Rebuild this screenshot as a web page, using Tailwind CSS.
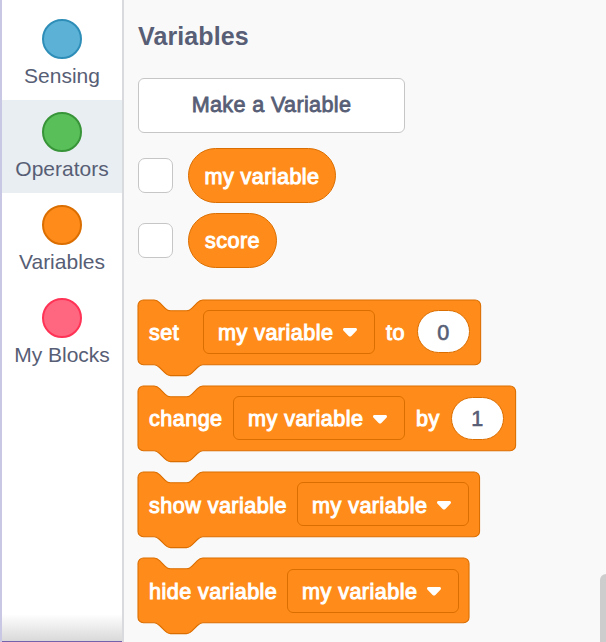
<!DOCTYPE html>
<html lang="en">
<head>
    <meta charset="UTF-8">
    <meta name="viewport" content="width=device-width, initial-scale=1.0">
    <title>Variables</title>
    <script src="https://cdn.jsdelivr.net/npm/@tailwindcss/browser@4"></script>
</head>
<body class="flex h-[642px] w-[606px] overflow-hidden bg-[#f9f9f9] font-['Liberation_Sans',Arial,sans-serif] text-[#575e75]">

    <!-- Category menu -->
    <nav class="relative flex w-[124px] shrink-0 flex-col border-r-2 border-l-2 border-r-[#d9dade] border-l-[#c8c8e4] bg-white pt-[7px] text-[21px] leading-6">
        <div class="flex h-[93px] flex-col items-center gap-[5px] pt-3">
            <span class="size-10 rounded-full border-2 border-[#2e8eb8] bg-[#5cb1d6]"></span>
            <span>Sensing</span>
        </div>
        <div class="flex h-[93px] flex-col items-center gap-[5px] bg-[#e9eef2] pt-3">
            <span class="size-10 rounded-full border-2 border-[#389438] bg-[#59c059]"></span>
            <span>Operators</span>
        </div>
        <div class="flex h-[93px] flex-col items-center gap-[5px] pt-3">
            <span class="size-10 rounded-full border-2 border-[#db6e00] bg-[#ff8c1a]"></span>
            <span>Variables</span>
        </div>
        <div class="flex h-[93px] flex-col items-center gap-[5px] pt-3">
            <span class="size-10 rounded-full border-2 border-[#ff3355] bg-[#ff6680]"></span>
            <span class="whitespace-nowrap">My Blocks</span>
        </div>
        <div class="mt-auto h-7 border-b border-[#7562ad] bg-linear-to-b from-white to-[#d9d9d9]"></div>
    </nav>

    <!-- Flyout -->
    <main class="relative grow pt-[21px] pl-[14px]">
        <h1 class="text-[25px] leading-[30px] font-bold tracking-[0.1px]">Variables</h1>

        <button class="mt-[27px] flex h-[55px] w-[267px] items-center justify-center rounded-[6px] border border-[#c6c6c6] bg-white text-[21.6px] tracking-[0.35px] [-webkit-text-stroke:0.8px_#575e75]">Make a Variable</button>

        <div class="mt-[15px] flex items-center gap-[15px]">
            <span class="size-[35px] rounded-[7px] border border-[#c6c6c6] bg-white"></span>
            <span class="flex h-[55px] w-[148px] items-center justify-center rounded-full border border-[#db6e00] bg-[#ff8c1a] pt-[3px] text-[21.6px] tracking-[0.4px] text-white [-webkit-text-stroke:1px_#fff]">my variable</span>
        </div>
        <div class="mt-[9.5px] flex items-center gap-[15px]">
            <span class="size-[35px] rounded-[7px] border border-[#c6c6c6] bg-white"></span>
            <span class="flex h-[55px] w-[89px] items-center justify-center rounded-full border border-[#db6e00] bg-[#ff8c1a] pt-[2px] text-[21.6px] tracking-[0.4px] text-white [-webkit-text-stroke:1px_#fff]">score</span>
        </div>

        <!-- Stack blocks, shapes drawn in 1.35x units -->
        <div class="mt-[32px] flex flex-col gap-[21.5px] text-[21.6px] tracking-[0.45px] text-white [-webkit-text-stroke:1px_#fff]">
            <div class="relative flex h-[64.8px] w-[342.6px] items-center pl-[11px]">
                <svg class="absolute inset-0 h-[78px] w-[350px] overflow-visible" fill="#ff8c1a" stroke="#db6e00"><path transform="scale(1.35)" stroke-width="0.8" d="M0,4A4,4 0 0,1 4,0H12c2,0 3,1 4,2l4,4c1,1 2,2 4,2h12c2,0 3,-1 4,-2l4,-4c1,-1 2,-2 4,-2H249.8a4,4 0 0,1 4,4v40a4,4 0 0,1 -4,4H48c-2,0 -3,1 -4,2l-4,4c-1,1 -2,2 -4,2h-12c-2,0 -3,-1 -4,-2l-4,-4c-1,-1 -2,-2 -4,-2H4a4,4 0 0,1 -4,-4z"/></svg>
                <span class="relative w-[54px] pt-[2px]">set</span>
                <span class="relative flex h-[44px] w-[172px] items-center justify-between rounded-[6px] border border-[#db6e00] pt-[2px] pr-[17px] pl-[14px]">my variable
                    <svg class="h-[9px] w-[14px]" viewBox="0 0 14 9" fill="#fff" stroke="none"><path d="M1.7,0H12.3C14,0 14.5,1.6 13.4,2.7L8.4,7.9Q7,9.3 5.6,7.9L0.6,2.7C-0.5,1.6 0,0 1.7,0z"/></svg>
                </span>
                <span class="relative ml-[11px] w-[31px] pt-[2px]">to</span>
                <span class="relative flex h-[43px] w-[53px] items-center justify-center rounded-full border border-[#db6e00] bg-white pt-[2px] text-[#575e75] [-webkit-text-stroke:0.6px_#575e75]">0</span>
            </div>
            <div class="relative flex h-[64.8px] w-[377.6px] items-center pl-[11px]">
                <svg class="absolute inset-0 h-[78px] w-[385px] overflow-visible" fill="#ff8c1a" stroke="#db6e00"><path transform="scale(1.35)" stroke-width="0.8" d="M0,4A4,4 0 0,1 4,0H12c2,0 3,1 4,2l4,4c1,1 2,2 4,2h12c2,0 3,-1 4,-2l4,-4c1,-1 2,-2 4,-2H275.7a4,4 0 0,1 4,4v40a4,4 0 0,1 -4,4H48c-2,0 -3,1 -4,2l-4,4c-1,1 -2,2 -4,2h-12c-2,0 -3,-1 -4,-2l-4,-4c-1,-1 -2,-2 -4,-2H4a4,4 0 0,1 -4,-4z"/></svg>
                <span class="relative w-[84px] pt-[2px]">change</span>
                <span class="relative flex h-[44px] w-[172px] items-center justify-between rounded-[6px] border border-[#db6e00] pt-[2px] pr-[17px] pl-[14px]">my variable
                    <svg class="h-[9px] w-[14px]" viewBox="0 0 14 9" fill="#fff" stroke="none"><path d="M1.7,0H12.3C14,0 14.5,1.6 13.4,2.7L8.4,7.9Q7,9.3 5.6,7.9L0.6,2.7C-0.5,1.6 0,0 1.7,0z"/></svg>
                </span>
                <span class="relative ml-[11px] w-[35px] pt-[2px]">by</span>
                <span class="relative flex h-[43px] w-[53px] items-center justify-center rounded-full border border-[#db6e00] bg-white pt-[2px] text-[#575e75] [-webkit-text-stroke:0.6px_#575e75]">1</span>
            </div>
            <div class="relative flex h-[64.8px] w-[342px] items-center pl-[11px]">
                <svg class="absolute inset-0 h-[78px] w-[350px] overflow-visible" fill="#ff8c1a" stroke="#db6e00"><path transform="scale(1.35)" stroke-width="0.8" d="M0,4A4,4 0 0,1 4,0H12c2,0 3,1 4,2l4,4c1,1 2,2 4,2h12c2,0 3,-1 4,-2l4,-4c1,-1 2,-2 4,-2H249a4,4 0 0,1 4,4v40a4,4 0 0,1 -4,4H48c-2,0 -3,1 -4,2l-4,4c-1,1 -2,2 -4,2h-12c-2,0 -3,-1 -4,-2l-4,-4c-1,-1 -2,-2 -4,-2H4a4,4 0 0,1 -4,-4z"/></svg>
                <span class="relative w-[148px] pt-[3px]">show variable</span>
                <span class="relative flex h-[44px] w-[172px] items-center justify-between rounded-[6px] border border-[#db6e00] pt-[3px] pr-[17px] pl-[14px]">my variable
                    <svg class="h-[9px] w-[14px]" viewBox="0 0 14 9" fill="#fff" stroke="none"><path d="M1.7,0H12.3C14,0 14.5,1.6 13.4,2.7L8.4,7.9Q7,9.3 5.6,7.9L0.6,2.7C-0.5,1.6 0,0 1.7,0z"/></svg>
                </span>
            </div>
            <div class="relative flex h-[64.8px] w-[331px] items-center pl-[11px]">
                <svg class="absolute inset-0 h-[78px] w-[340px] overflow-visible" fill="#ff8c1a" stroke="#db6e00"><path transform="scale(1.35)" stroke-width="0.8" d="M0,4A4,4 0 0,1 4,0H12c2,0 3,1 4,2l4,4c1,1 2,2 4,2h12c2,0 3,-1 4,-2l4,-4c1,-1 2,-2 4,-2H241.2a4,4 0 0,1 4,4v40a4,4 0 0,1 -4,4H48c-2,0 -3,1 -4,2l-4,4c-1,1 -2,2 -4,2h-12c-2,0 -3,-1 -4,-2l-4,-4c-1,-1 -2,-2 -4,-2H4a4,4 0 0,1 -4,-4z"/></svg>
                <span class="relative w-[138px] pt-[2px]">hide variable</span>
                <span class="relative flex h-[44px] w-[172px] items-center justify-between rounded-[6px] border border-[#db6e00] pt-[2px] pr-[17px] pl-[14px]">my variable
                    <svg class="h-[9px] w-[14px]" viewBox="0 0 14 9" fill="#fff" stroke="none"><path d="M1.7,0H12.3C14,0 14.5,1.6 13.4,2.7L8.4,7.9Q7,9.3 5.6,7.9L0.6,2.7C-0.5,1.6 0,0 1.7,0z"/></svg>
                </span>
            </div>
        </div>

        <!-- Scrollbar thumb -->
        <div class="absolute top-[574px] right-0 h-[68px] w-[6px] rounded-tl-[6px] bg-[#cecdce]"></div>
    </main>
</body>
</html>
